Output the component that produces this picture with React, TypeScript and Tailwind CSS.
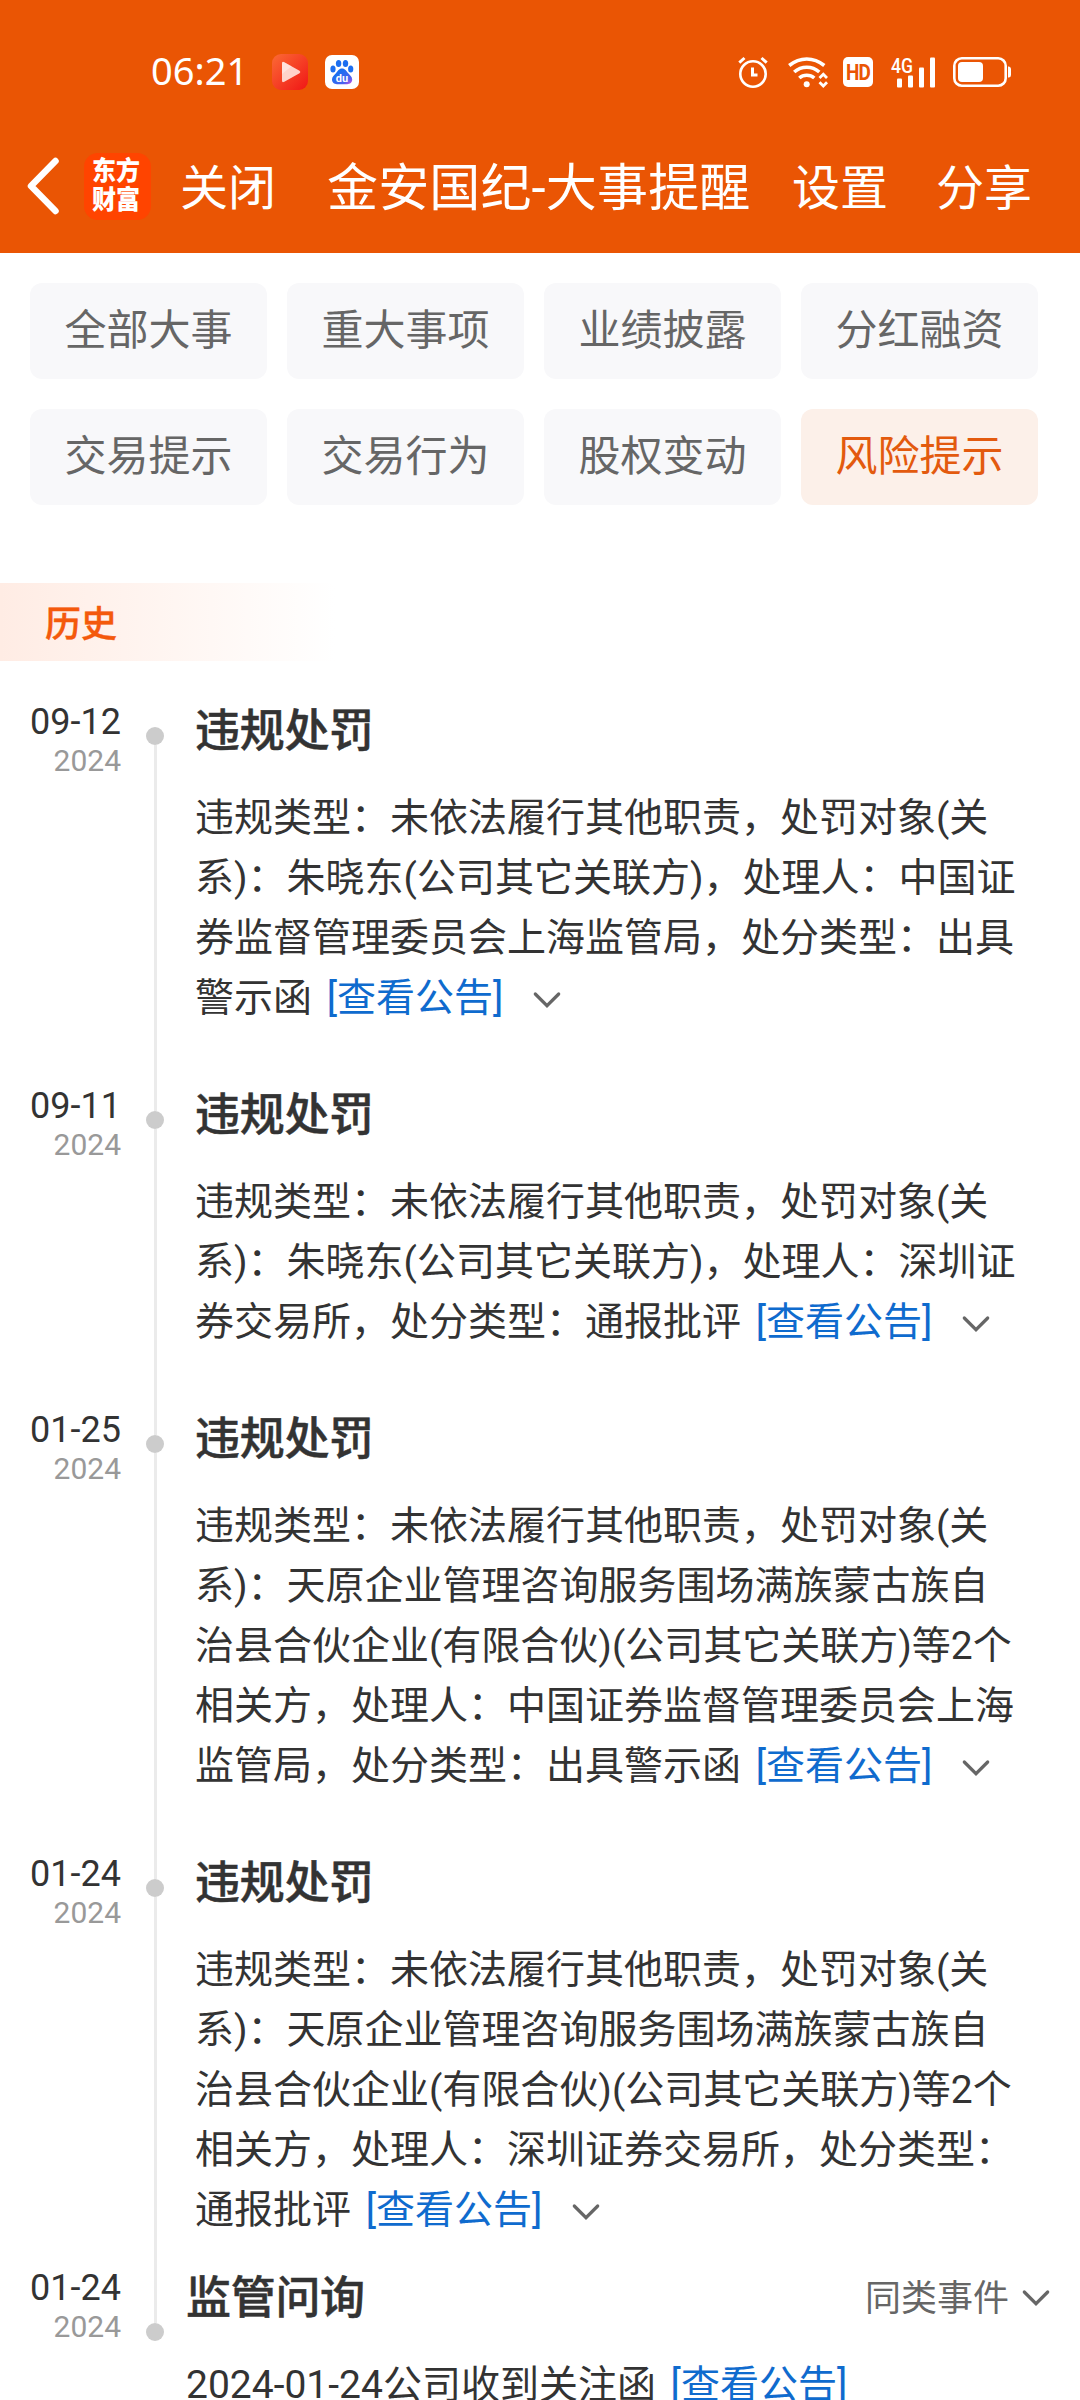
import { useState } from 'react';
import clsx from 'clsx';

interface EventItem {
  id: number;
  date: string;
  year: string;
  title: string;
  content: string;
}

const filters = ['全部大事', '重大事项', '业绩披露', '分红融资', '交易提示', '交易行为', '股权变动', '风险提示'];

const events: EventItem[] = [
  {
    id: 1,
    date: '09-12',
    year: '2024',
    title: '违规处罚',
    content:
      '违规类型：未依法履行其他职责，处罚对象(关系)：朱晓东(公司其它关联方)，处理人：中国证券监督管理委员会上海监管局，处分类型：出具警示函'
  },
  {
    id: 2,
    date: '09-11',
    year: '2024',
    title: '违规处罚',
    content:
      '违规类型：未依法履行其他职责，处罚对象(关系)：朱晓东(公司其它关联方)，处理人：深圳证券交易所，处分类型：通报批评'
  },
  {
    id: 3,
    date: '01-25',
    year: '2024',
    title: '违规处罚',
    content:
      '违规类型：未依法履行其他职责，处罚对象(关系)：天原企业管理咨询服务围场满族蒙古族自治县合伙企业(有限合伙)(公司其它关联方)等2个相关方，处理人：中国证券监督管理委员会上海监管局，处分类型：出具警示函'
  },
  {
    id: 4,
    date: '01-24',
    year: '2024',
    title: '违规处罚',
    content:
      '违规类型：未依法履行其他职责，处罚对象(关系)：天原企业管理咨询服务围场满族蒙古族自治县合伙企业(有限合伙)(公司其它关联方)等2个相关方，处理人：深圳证券交易所，处分类型：通报批评'
  }
];

function ChevronIcon({ className }: { className?: string }) {
  return (
    <svg className={className} width="28" height="20" viewBox="0 0 28 20" fill="none" stroke="#666" strokeWidth="3.2" strokeLinecap="round">
      <path d="M2.3 3 14 14.7 25.7 3" />
    </svg>
  );
}

function VideoAppIcon() {
  return (
    <svg width="36" height="36" viewBox="0 0 36 36">
      <defs>
        <linearGradient id="video-bg" x1="0" y1="0" x2="1" y2="1">
          <stop offset="0" stopColor="#fb6a35" />
          <stop offset="1" stopColor="#f01616" />
        </linearGradient>
      </defs>
      <rect width="36" height="36" rx="9" fill="url(#video-bg)" />
      <path d="M10 9.500Q10 7 12.300 8.300L27.500 16.800Q29.300 18 27.500 19.200L12.300 27.700Q10 29 10 26.500Z" fill="#ffd3cb" />
      <path d="M10 9.500Q10 7 12.300 8.300L19.500 12.300 10 20Z" fill="#fff" fillOpacity="0.35" />
    </svg>
  );
}

function BaiduIcon() {
  return (
    <svg width="34" height="34" viewBox="0 0 34 34">
      <defs>
        <linearGradient id="paw" x1="0" y1="0" x2="1" y2="1">
          <stop offset="0.3" stopColor="#1c6ef0" />
          <stop offset="0.75" stopColor="#4a62ee" />
          <stop offset="1" stopColor="#d94be0" />
        </linearGradient>
      </defs>
      <rect width="34" height="34" rx="7" fill="#fff" />
      <ellipse cx="8" cy="14" rx="2.600" ry="3.500" fill="#1c6ef0" />
      <ellipse cx="13.600" cy="8.500" rx="2.700" ry="3.600" fill="#1c6ef0" />
      <ellipse cx="20.500" cy="8.500" rx="2.700" ry="3.600" fill="#1c6ef0" />
      <ellipse cx="25.700" cy="14" rx="2.600" ry="3.500" fill="#1c6ef0" />
      <path d="M17 13.500c3.200 0 4.300 2.600 6 4.600 1.800 2 4.200 3.500 4.200 6.500 0 3-2.300 4.600-5 4.600H12c-2.800 0-5-1.600-5-4.600 0-3 2.400-4.500 4.100-6.500 1.700-2 2.700-4.600 5.900-4.600Z" fill="url(#paw)" />
      <text x="17" y="27" textAnchor="middle" fontSize="11" fontWeight="700" fill="#fff" className="font-['Roboto',sans-serif]">du</text>
    </svg>
  );
}

function AlarmIcon() {
  return (
    <svg width="30" height="32" viewBox="0 0 30 32" fill="none" stroke="#fff" strokeWidth="2.600">
      <circle cx="15" cy="18" r="12.700" />
      <path d="M14.500 11.500V19H19.500" strokeWidth="3" />
      <path d="M1.300 6.600 6.500 2M28.700 6.600 23.500 2" strokeWidth="3" />
    </svg>
  );
}

function WifiIcon() {
  return (
    <svg width="40" height="31" viewBox="0 0 40 31" fill="none" stroke="#fff" strokeWidth="3.600">
      <path d="M1.200 8.500C12-.2 25.500-.2 36.300 8.500" />
      <path d="M6.200 15C13.500 8.700 24 8.700 31.300 15" />
      <path d="M11.300 21C15.500 17.300 22 17.300 26.300 21" />
      <circle cx="18.700" cy="27.300" r="3" fill="#fff" stroke="none" />
      <path d="M31.500 21 35.300 17.300 39 21M31.500 25.300 35.300 29 39 25.300" strokeWidth="2.800" />
    </svg>
  );
}

function SignalIcon() {
  return (
    <svg className="overflow-visible" width="45" height="31" viewBox="0 0 45 31" fill="#fff">
      <text x="0" y="15.500" fontSize="20" fontWeight="500" textLength="22" lengthAdjust="spacingAndGlyphs" className="font-['Roboto',sans-serif]">4G</text>
      <rect x="6" y="21.500" width="5" height="9" rx="1" />
      <rect x="17" y="18.500" width="5" height="12" rx="1" />
      <rect x="28" y="10.500" width="5" height="20" rx="1" />
      <rect x="39" y="0.500" width="5" height="30" rx="1" />
    </svg>
  );
}

function BatteryIcon() {
  return (
    <svg width="58" height="30" viewBox="0 0 58 30" fill="none">
      <rect x="1.300" y="1.300" width="51.400" height="27.400" rx="7.500" stroke="#fff" strokeWidth="2.600" />
      <rect x="5" y="5" width="25" height="20" rx="4" fill="#fff" />
      <path d="M55 9.500H56Q58 10 58 12V18Q58 20 56 20.500H55Z" fill="#fff" />
    </svg>
  );
}

function StatusBar() {
  return (
    <div className="flex h-[144px] items-center pl-[151px] pr-[69px]">
      <span className="mb-1 w-[121px] font-['Noto_Sans',sans-serif] text-[38px] leading-none">06:21</span>
      <VideoAppIcon />
      <span className="ml-[17px]">
        <BaiduIcon />
      </span>
      <div className="ml-auto flex items-center">
        <AlarmIcon />
        <span className="ml-5">
          <WifiIcon />
        </span>
        <span className="ml-[15px] flex h-[30px] w-[30px] items-center justify-center rounded-[5px] bg-white text-[22px] font-bold tracking-[-1px] text-[#ea5504]">
          <span className="scale-x-[0.86]">HD</span>
        </span>
        <span className="ml-[18px]">
          <SignalIcon />
        </span>
        <span className="ml-[17px]">
          <BatteryIcon />
        </span>
      </div>
    </div>
  );
}

function NavBar() {
  return (
    <div className="flex h-[84px] items-center pl-[27px] text-[48px] leading-none">
      <svg width="33" height="58" viewBox="0 0 33 58" fill="none" stroke="#fff" strokeWidth="6.500" strokeLinecap="round" strokeLinejoin="round">
        <path d="M28.500 4 4 29 28.500 54" />
      </svg>
      <div className="ml-6 flex h-[67px] w-[67px] flex-col items-center justify-center rounded-[14px] bg-[#ff4400] pr-[3px] text-[24px] font-black leading-[29px]">
        <span className="scale-y-110">东方</span>
        <span className="scale-y-110">财富</span>
      </div>
      <span className="ml-[29px] mt-[5px] w-[147px]">关闭</span>
      <h1 className="mt-[5px] w-[465px] whitespace-nowrap text-[51px] font-normal tracking-[0.15px]">金安国纪-大事提醒</h1>
      <span className="mt-[5px] w-[144px]">设置</span>
      <span className="mt-[5px]">分享</span>
    </div>
  );
}

function NoticeLink() {
  return <a className="ml-[5px] whitespace-nowrap text-[#0f6bce]">[查看公告]</a>;
}

function DateLabel({ date, year }: { date: string; year: string }) {
  return (
    <div className="w-[121px] shrink-0 pt-px text-right">
      <div className="text-[36px] leading-[48px] text-[#333]">{date}</div>
      <div className="-mt-px text-[30px] leading-8 text-[#999]">{year}</div>
    </div>
  );
}

export default function App() {
  const [active, setActive] = useState('风险提示');

  return (
    <div className="h-[2400px] w-[1080px] overflow-hidden bg-white font-['Roboto','Noto_Sans_CJK_SC',sans-serif] text-[#333]">
      {/* 顶部栏 */}
      <header className="h-[253px] bg-[#ea5504] text-white">
        <StatusBar />
        <NavBar />
      </header>

      {/* 分类筛选 */}
      <div className="grid grid-cols-[repeat(4,237px)] gap-x-5 gap-y-[30px] pl-[30px] pt-[30px]">
        {filters.map(name => (
          <button
            key={name}
            onClick={() => setActive(name)}
            className={clsx(
              'h-24 rounded-xl text-[42px] leading-none',
              active === name ? 'bg-[#fcf0e9] text-[#e35a0e]' : 'bg-[#f8f8fa] text-[#666]'
            )}
          >
            {name}
          </button>
        ))}
      </div>

      <h2 className="mt-[78px] flex h-[78px] w-[335px] items-center bg-linear-to-r from-[#ffece4] to-white pl-[45px] pt-1.5 text-[36px] font-medium leading-none text-[#f4590c] [-webkit-text-stroke:0.4px]">
        历史
      </h2>

      {/* 时间轴 */}
      <div className="mt-9">
        {events.map((event, index) => (
          <div key={event.id} className="flex">
            <DateLabel date={event.date} year={event.year} />
            <div className="ml-[25px] flex w-[18px] shrink-0 flex-col items-center">
              <div className={clsx('h-[30px] w-[3px]', index > 0 && 'bg-[#ebebeb]')} />
              <div className="h-[18px] w-[18px] rounded-full bg-[#ccc]" />
              <div className="w-[3px] flex-1 bg-[#ebebeb]" />
            </div>
            <div className={clsx('ml-[31px] w-[825px]', index === events.length - 1 ? 'pb-[23px]' : 'pb-[53px]')}>
              <h3 className="mb-[22px] pt-px text-[45px] font-medium leading-[68px] tracking-[-0.3px] [-webkit-text-stroke:0.5px]">
                {event.title}
              </h3>
              <p className="text-[39px] leading-[60px]">
                {event.content} <NoticeLink />
                <ChevronIcon className="ml-[30px] inline-block align-baseline" />
              </p>
            </div>
          </div>
        ))}

        <div className="flex">
          <DateLabel date="01-24" year="2024" />
          <div className="ml-[25px] flex w-[18px] shrink-0 flex-col items-center">
            <div className="h-[60px] w-[3px] bg-[#ebebeb]" />
            <div className="h-[18px] w-[18px] rounded-full bg-[#ccc]" />
          </div>
          <div className="ml-[22px] flex-1 pr-[30px]">
            <div className="mb-[21px] flex h-[71px] items-center justify-between pt-px">
              <h3 className="text-[45px] font-medium leading-[70px] tracking-[-0.3px] [-webkit-text-stroke:0.5px]">监管问询</h3>
              <button className="flex items-center text-[36px] leading-[70px] text-[#666]">
                同类事件
                <ChevronIcon className="ml-[13px]" />
              </button>
            </div>
            <p className="whitespace-nowrap text-[39px] leading-[60px]">
              2024-01-24公司收到关注函 <NoticeLink />
            </p>
          </div>
        </div>
      </div>
    </div>
  );
}
